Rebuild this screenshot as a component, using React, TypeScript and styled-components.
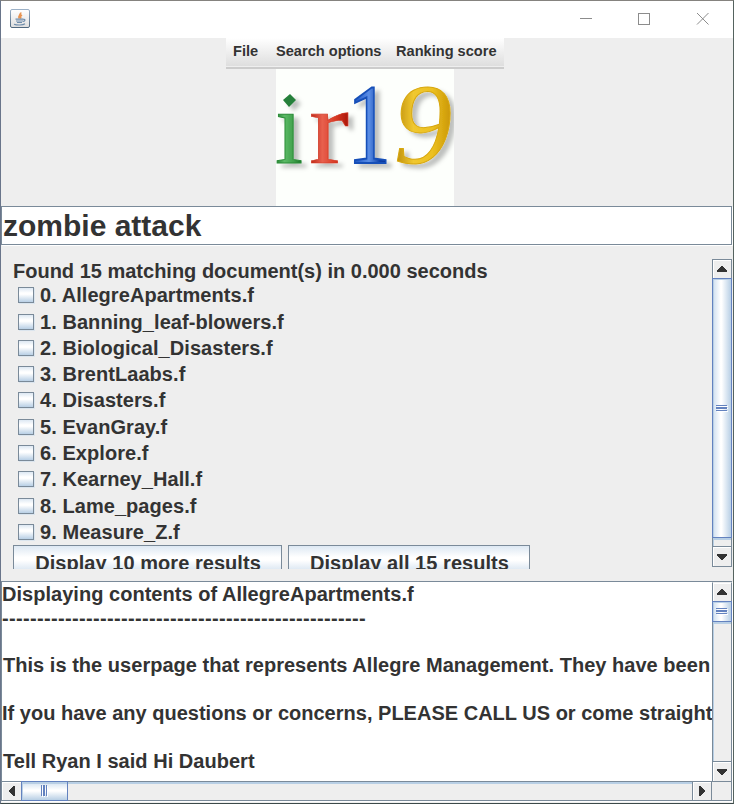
import React from "react";
import styled, { createGlobalStyle, css } from "styled-components";

const Global = createGlobalStyle`
  * { box-sizing: border-box; }
  html, body { margin: 0; padding: 0; background: #eee; overflow: hidden; }
`;

const steel = "#7a8a99";
const blue = "#6382bf";
const pale = "#b8cfe5";

const Window = styled.div`
  width: 734px;
  height: 804px;
  display: flex;
  flex-direction: column;
  background: #eee;
  border: 1px solid;
  border-color: #85837f #55635f #3c4a4a #69758a;
  overflow: hidden;
  font-family: "Liberation Sans", Arial, sans-serif;
  font-weight: bold;
  color: #333;
  white-space: pre;
`;

const TitleBar = styled.header`
  height: 37px;
  flex: none;
  background: #fff;
  display: flex;
  justify-content: space-between;
  padding-left: 9px;
`;

const JavaIcon = styled.svg`
  width: 20px;
  height: 19px;
  margin-top: 8px;
`;

const Controls = styled.svg`
  width: 174px;
  height: 37px;
  flex: none;
`;

const Brand = styled.section`
  height: 168px;
  flex: none;
  display: flex;
  flex-direction: column;
  align-items: center;
`;

const MenuBar = styled.nav`
  width: 278px;
  height: 31px;
  flex: none;
  margin-right: 4px;
  display: flex;
  padding: 4px 0 0 7px;
  background: linear-gradient(#fff, #dedede 28px, #eee 28px, #eee 29px, #ccc 29px);
`;

const MenuItem = styled.span<{ $width: number }>`
  width: ${(p) => p.$width}px;
  flex: none;
  font-size: 14.6px;
  line-height: 18px;
`;

const Logo = styled.svg`
  width: 178px;
  height: 137px;
  margin-right: 4px;
  background: #fdfffc;
`;

const SearchField = styled.div`
  height: 39px;
  flex: none;
  width: 731px;
  border: 1px solid ${steel};
  background: #fff;
  box-shadow: 1px 1px 0 #fff;
  font-size: 30px;
  line-height: 38px;
  padding-left: 1px;
`;

const ResultsPane = styled.section`
  height: 308px;
  flex: none;
  margin-top: 14px;
  padding: 0 1px 0 12px;
  display: flex;
  justify-content: space-between;
`;

const Results = styled.div`
  height: 310px;
  flex: 1;
  overflow: hidden;
  font-size: 20px;
`;

const Summary = styled.div`
  height: 24.25px;
  line-height: 24px;
`;

const Result = styled.label`
  height: 26.3px;
  display: flex;
  align-items: flex-start;
  padding: 4px 0 0 5px;
  gap: 6px;
  line-height: 17.4px;
  letter-spacing: 0.06px;
`;

const CheckBox = styled.span`
  width: 16px;
  height: 16px;
  flex: none;
  border: 1px solid ${steel};
  background: linear-gradient(#dde8f3, #fff 35%, #fff 45%, #b8cfe5);
  box-shadow: 1px 1px 0 #dbe5ee;
`;

const Actions = styled.div`
  display: flex;
  gap: 6px;
  margin-top: -1.5px;
`;

const ActionButton = styled.button<{ $width: number }>`
  width: ${(p) => p.$width}px;
  height: 36px;
  flex: none;
  padding: 0 0 0 1px;
  border: 1px solid ${steel};
  background: linear-gradient(#dde8f3, #fff 33%, #fff 42%, #b8cfe5);
  font: inherit;
  color: inherit;
  line-height: 34px;
  letter-spacing: 0.05px;
`;

const ContentPane = styled.section`
  height: 220px;
  width: 731px;
  margin-top: 14px;
  flex: none;
  display: grid;
  grid-template-columns: 711px 20px;
  grid-template-rows: 200px 20px;
  border-bottom: 1px solid ${steel};
  box-shadow: 1px 1px 0 #fff;
`;

const Content = styled.div`
  background: #fff;
  border: 1px solid ${steel};
  border-width: 1px 0 0 1px;
  font-size: 20px;
  overflow: hidden;
`;

const SideBar = styled.div`
  height: 201px;
  padding-top: 1px;
  border-top: 1px solid ${steel};
  display: flex;
  & > div { border-top-color: #eee; margin-top: -1px; height: 200px; }
`;

const Line = styled.div<{ $spacing?: number; $indent?: number }>`
  height: 23.8px;
  line-height: 24px;
  letter-spacing: ${(p) => p.$spacing ?? 0.03}px;
  padding-left: ${(p) => p.$indent ?? 0}px;
`;

const Corner = styled.div`
  border-right: 1px solid ${steel};
`;

type Dir = { $horizontal?: boolean };

const Bar = styled.div<Dir>`
  display: flex;
  flex-direction: ${(p) => (p.$horizontal ? "row" : "column")};
  background: #eee;
  border: 1px solid ${steel};
  ${(p) =>
    p.$horizontal
      ? css`height: 19px; border-bottom: 0;`
      : css`width: 20px; height: 100%;`}
`;

const ArrowButton = styled.span<Dir & { $end?: boolean }>`
  flex: none;
  display: flex;
  align-items: center;
  justify-content: center;
  width: ${(p) => (p.$horizontal ? 19 : 18)}px;
  height: ${(p) => (p.$horizontal ? 18 : p.$end ? 20 : 18)}px;
  box-shadow: inset 1px 1px 0 #fff;
  ${(p) => p.$end && (p.$horizontal ? css`border-left: 1px solid ${steel};` : css`border-top: 1px solid ${steel};`)}
`;

const Thumb = styled.span<Dir & { $size: number }>`
  flex: none;
  display: flex;
  align-items: center;
  justify-content: center;
  border: 1px solid ${blue};
  ${(p) =>
    p.$horizontal
      ? css`
          width: ${p.$size}px; height: 20px; margin-top: -1px;
          background: linear-gradient(${pale} 2px, #dde8f3 2px, #fff 45%, #fff 50%, #b8cfe5);
          box-shadow: inset 1px 0 0 ${pale};
        `
      : css`
          height: ${p.$size}px; width: 20px; margin-left: -1px;
          background: linear-gradient(90deg, #cfdff0, #fff 42%, #fff 48%, #b8cfe5);
          box-shadow: inset 1px 1px 0 ${pale};
        `}
`;

const Track = styled.span<Dir>`
  flex: 1;
  box-shadow: inset ${(p) => (p.$horizontal ? "0 2px" : "1px 2px")} 0 ${pale};
`;

const arrows = {
  up: "M5 0h2v1h1v1h1v1h1v1h1v2H1V4h1V3h1V2h1V1h1z",
  down: "M1 0h10v2h-1v1H9v1H8v1H7v1H5V5H4V4H3V3H2V2H1z",
  left: "M6 1v10H4v-1H3V9H2V8H1V7H0V5h1V4h1V3h1V2h1V1z",
  right: "M0 1v10h2v-1h1V9h1V8h1V7h1V5H5V4H4V3H3V2H2V1z",
};

function Arrow({ dir }: { dir: keyof typeof arrows }) {
  const vertical = dir === "up" || dir === "down";
  return (
    <svg width={vertical ? 12 : 6} height={vertical ? 6 : 12} fill="#333" shapeRendering="crispEdges">
      <path d={arrows[dir]} />
    </svg>
  );
}

function Grip({ horizontal }: { horizontal?: boolean }) {
  return (
    <svg width={horizontal ? 7 : 12} height={horizontal ? 12 : 7} shapeRendering="crispEdges">
      {[0, 2, 5].map((p) =>
        horizontal ? (
          <g key={p}>
            <rect x={p + 1} y={1} width={1} height={11} fill="#fff" />
            <rect x={p} y={0} width={p === 2 ? 2 : 1} height={11} fill={blue} />
          </g>
        ) : (
          <g key={p}>
            <rect x={1} y={p + 1} width={11} height={1} fill="#fff" />
            <rect x={0} y={p} width={11} height={p === 2 ? 2 : 1} fill={blue} />
          </g>
        )
      )}
    </svg>
  );
}

function ScrollBar({ size, horizontal }: { size: number; horizontal?: boolean }) {
  return (
    <Bar $horizontal={horizontal}>
      <ArrowButton $horizontal={horizontal}>
        <Arrow dir={horizontal ? "left" : "up"} />
      </ArrowButton>
      <Thumb $horizontal={horizontal} $size={size}>
        <Grip horizontal={horizontal} />
      </Thumb>
      <Track $horizontal={horizontal} />
      <ArrowButton $horizontal={horizontal} $end>
        <Arrow dir={horizontal ? "right" : "down"} />
      </ArrowButton>
    </Bar>
  );
}

function Gradient({ id, stops }: { id: string; stops: string[] }) {
  return (
    <linearGradient id={id}>
      {stops.map((c, i) => (
        <stop key={i} offset={i / (stops.length - 1)} stopColor={c} />
      ))}
    </linearGradient>
  );
}

function LogoArt() {
  return (
    <Logo viewBox="0 0 178 137" fontFamily="Liberation Serif, Times New Roman, serif" fontWeight="normal">
      <defs>
        <Gradient id="green" stops={["#1c7a2c", "#5cba66", "#3fa04b", "#146a20"]} />
        <Gradient id="red" stops={["#b82010", "#e8604e", "#d83a24", "#a81408"]} />
        <Gradient id="azure" stops={["#0c3da0", "#2a62cc", "#5b8ee6", "#0c3fa8", "#06308c"]} />
        <Gradient id="gold" stops={["#b88808", "#f0c830", "#ecc020", "#c89404"]} />
        <clipPath id="stem"><rect x="0" y="40" width="50" height="70" /></clipPath>
        <filter id="shade" x="-20%" y="-20%" width="150%" height="150%">
          <feDropShadow dx="5" dy="4" stdDeviation="2" floodColor="#000" floodOpacity="0.25" />
        </filter>
      </defs>
      <g filter="url(#shade)">
        <g clipPath="url(#stem)">
          <text x="-1" y="94" fontSize="106" textLength="28" lengthAdjust="spacingAndGlyphs" fill="url(#green)" stroke="#2b8c38" strokeWidth="1">i</text>
        </g>
        <path d="M7 31l7-6 6 6-7 7z" fill="#26803a" />
        <text x="33" y="94" fontSize="106" textLength="40" lengthAdjust="spacingAndGlyphs" fill="url(#red)" stroke="#cf3420" strokeWidth="0.6">r</text>
        <text x="71" y="94" fontSize="115" textLength="44" lengthAdjust="spacingAndGlyphs" fill="url(#azure)" stroke="#174fb8" strokeWidth="2">1</text>
        <text x="118" y="94" fontSize="115" fontStyle="italic" textLength="58" lengthAdjust="spacingAndGlyphs" fill="url(#gold)" stroke="#d8a810" strokeWidth="1">9</text>
      </g>
    </Logo>
  );
}

const files = [
  "AllegreApartments.f", "Banning_leaf-blowers.f", "Biological_Disasters.f", "BrentLaabs.f", "Disasters.f",
  "EvanGray.f", "Explore.f", "Kearney_Hall.f", "Lame_pages.f", "Measure_Z.f",
];

export default function App() {
  return (
    <Window>
      <Global />
      <TitleBar>
        <JavaIcon viewBox="0 0 20 19" fill="none">
          <defs>
            <linearGradient id="tile" x2="0" y2="1">
              <stop stopColor="#fff" /><stop offset="1" stopColor="#dedede" />
            </linearGradient>
            <linearGradient id="edge" x2="0" y2="1">
              <stop stopColor="#9bb0c6" /><stop offset="1" stopColor="#50687f" />
            </linearGradient>
          </defs>
          <rect x=".5" y=".5" width="19" height="18" rx="1.5" fill="url(#tile)" stroke="url(#edge)" />
          <path d="M10.500 3.500c1 2-3 3-1 6M12 6c-2 1-2 2-1 3.500" stroke="#e89350" strokeWidth="1.8" />
          <path d="M5.500 10.200h8M6 12h7M7 13.500h5M13.500 10.500c2-.6 2 1.600-.5 2M4 15.200c3 1.200 9 1 11-.4" stroke="#6e8cab" strokeWidth="1.2" />
        </JavaIcon>
        <Controls viewBox="0 0 174 37" fill="none" stroke="#8c8c8c">
          <path d="M21 17.500h12M79.500 12.500h11v11h-11z" shapeRendering="crispEdges" />
          <path d="M138 12l11.500 11.500M149.500 12L138 23.500" />
        </Controls>
      </TitleBar>
      <Brand>
        <MenuBar>
          <MenuItem $width={43}>File</MenuItem>
          <MenuItem $width={120}>Search options</MenuItem>
          <MenuItem $width={104}>Ranking score</MenuItem>
        </MenuBar>
        <LogoArt />
      </Brand>
      <SearchField>zombie attack</SearchField>
      <ResultsPane>
        <Results>
          <Summary>Found 15 matching document(s) in 0.000 seconds</Summary>
          {files.map((name, i) => (
            <Result key={name}>
              <CheckBox />
              <span>{`${i}. ${name}`}</span>
            </Result>
          ))}
          <Actions>
            <ActionButton $width={269}>Display 10 more results</ActionButton>
            <ActionButton $width={242}>Display all 15 results</ActionButton>
          </Actions>
        </Results>
        <ScrollBar size={260} />
      </ResultsPane>
      <ContentPane>
        <Content>
          <Line>Displaying contents of AllegreApartments.f</Line>
          <Line $spacing={0.34}>{"-".repeat(52)}</Line>
          <Line />
          <Line $indent={1}>This is the userpage that represents Allegre Management. They have been</Line>
          <Line />
          <Line $spacing={0.01}>If you have any questions or concerns, PLEASE CALL US or come straight</Line>
          <Line />
          <Line $indent={1}>Tell Ryan I said Hi Daubert</Line>
        </Content>
        <SideBar>
          <ScrollBar size={21} />
        </SideBar>
        <ScrollBar size={47} horizontal />
        <Corner />
      </ContentPane>
    </Window>
  );
}
